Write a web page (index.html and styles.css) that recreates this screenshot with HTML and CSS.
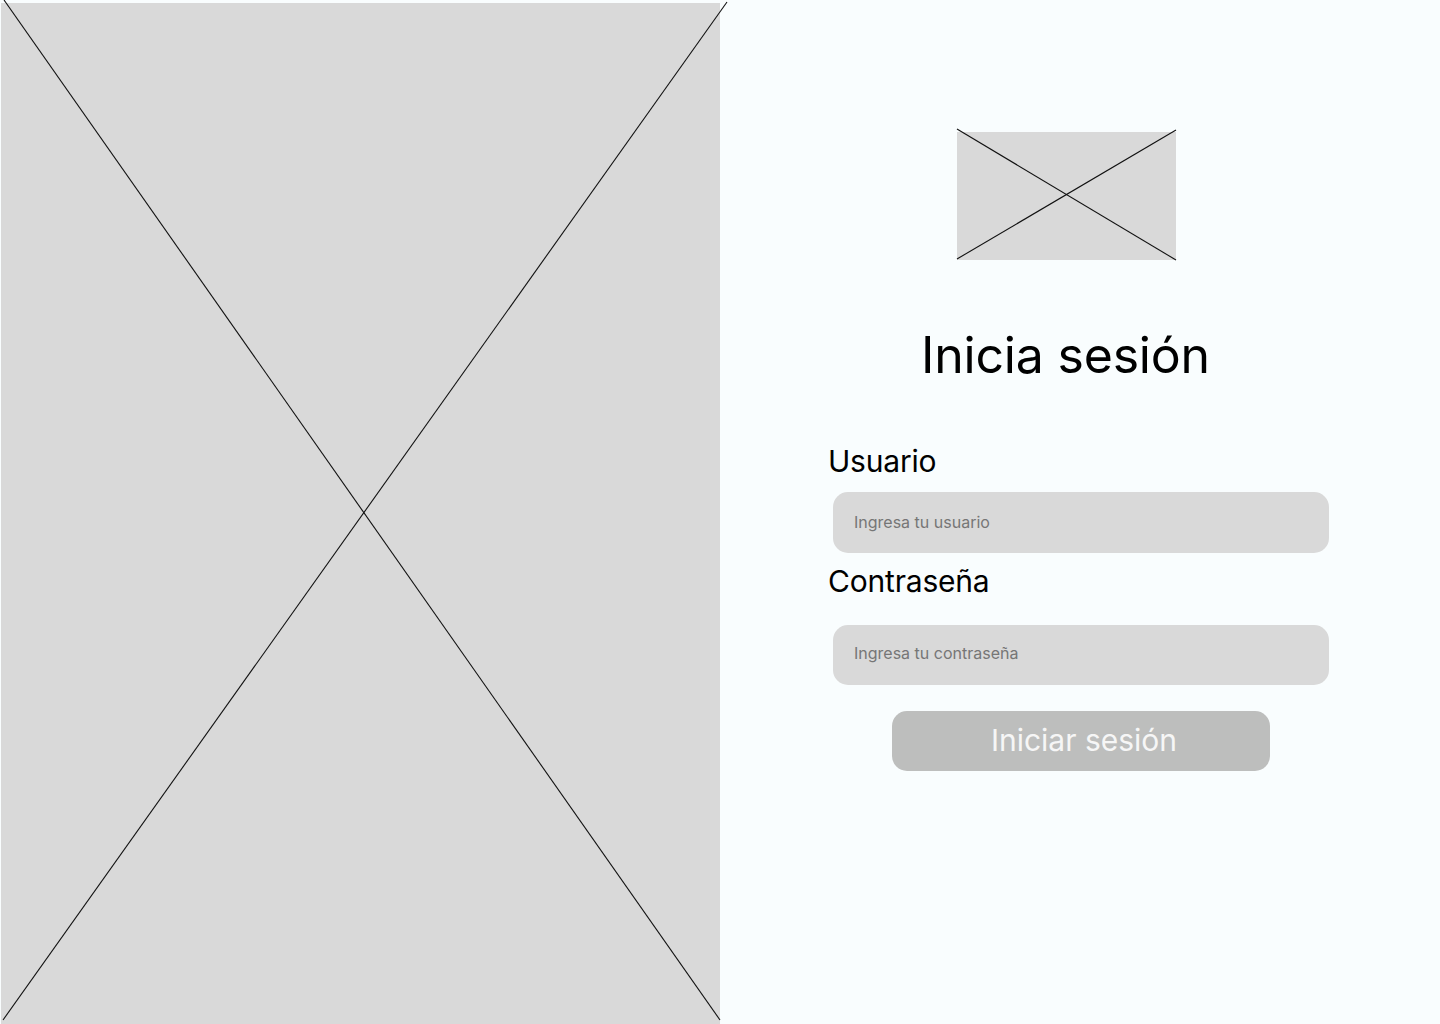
FILE: index.html
```html
<!DOCTYPE html>
<html lang="es">
<head>
  <meta charset="UTF-8">
  <meta name="viewport" content="width=device-width, initial-scale=1.0">
  <title>Inicia sesión</title>
  <link rel="stylesheet" href="styles.css">
</head>
<body>
  <div class="page">
    <div class="hero">
      <svg class="cross" viewBox="0 0 719 1021" preserveAspectRatio="none">
        <line x1="3" y1="-3" x2="719" y2="1017" />
        <line x1="726" y1="-1" x2="2" y2="1017" />
      </svg>
    </div>

    <div class="panel">
      <div class="logo">
        <svg class="cross" viewBox="0 0 219 128" preserveAspectRatio="none">
          <line x1="0" y1="-3" x2="219" y2="128" />
          <line x1="219" y1="-2" x2="0" y2="127" />
        </svg>
      </div>

      <h1 class="title">Inicia sesión</h1>

      <form class="form">
        <label for="usuario" class="label">Usuario</label>
        <input type="text" id="usuario" class="field" placeholder="Ingresa tu usuario">

        <label for="password" class="label label-pass">Contraseña</label>
        <input type="password" id="password" class="field field-pass" placeholder="Ingresa tu contraseña">

        <button type="button" class="submit">Iniciar sesión</button>
      </form>
    </div>
  </div>
</body>
</html>
```

FILE: styles.css
```css
body {
  margin: 0;
  padding: 0;
  background: #f9fdfe;
  font-family: Inter, "Noto Sans", sans-serif;
  color: #000;
}

.page {
  display: flex;
  height: 1024px;
  overflow: hidden;
}

.hero {
  width: 719px;
  height: 1021px;
  margin: 3px 0 0 1px;
  background: #d9d9d9;
  flex-shrink: 0;
}

.cross {
  display: block;
  width: 100%;
  height: 100%;
  overflow: visible;
}
.cross line {
  stroke: #111;
  stroke-width: 1.1;
}

.panel {
  flex: 1;
  display: flex;
  flex-direction: column;
  align-items: flex-start;
  padding-left: 108px;
}

.logo {
  width: 219px;
  height: 128px;
  margin: 132px 0 0 129px;
  background: #d9d9d9;
}

.title {
  margin: 65px 0 0 93px;
  font-size: 50px;
  line-height: 60px;
  font-weight: 400;
  letter-spacing: -0.2px;
}

.form {
  display: flex;
  flex-direction: column;
  align-items: flex-start;
  margin-top: 59px;
}

.label {
  font-size: 30px;
  line-height: 34px;
  letter-spacing: -0.2px;
}
.label-pass {
  margin-top: 11px;
}

.field {
  box-sizing: border-box;
  width: 496px;
  height: 61px;
  margin: 14px 0 0 5px;
  padding: 0 21px 2px;
  border: none;
  border-radius: 15px;
  background: #d9d9d9;
  font-family: inherit;
  font-size: 16px;
  color: #333;
  outline: none;
}
.field::placeholder {
  color: #767676;
}
.field-pass {
  height: 60px;
  margin-top: 27px;
  padding-bottom: 5px;
}

.submit {
  width: 378px;
  height: 60px;
  margin: 26px 0 0 64px;
  border: none;
  border-radius: 15px;
  background: #bdbebd;
  color: #f6f6f6;
  font-family: inherit;
  font-size: 30px;
  padding: 0 0 3px 6px;
  cursor: pointer;
}
```
